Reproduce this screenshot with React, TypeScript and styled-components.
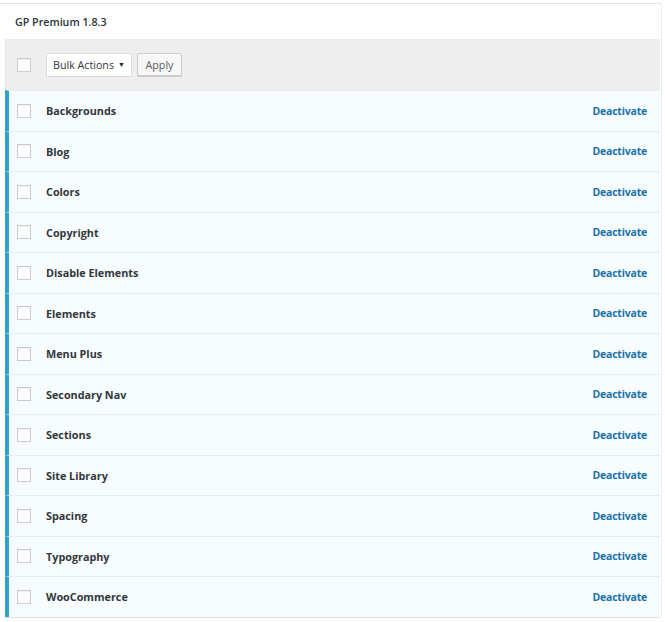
import React from "react";
import styled, { createGlobalStyle } from "styled-components";

const GlobalStyle = createGlobalStyle`
  html, body { margin: 0; padding: 0; background: #ffffff; }
  body { font-family: "Open Sans", "Noto Sans", sans-serif; color: #23282d; }
  * { box-sizing: border-box; }
`;

const Card = styled.div`
  margin-top: 3px;
  width: 662px;
  border-top: 1px solid #e6e6e6;
  border-right: 1px solid #ededed;
  background: #ffffff;
  display: flex;
  flex-direction: column;
`;

const Title = styled.div`
  height: 35px;
  display: flex;
  align-items: center;
  padding-left: 15px;
  font-size: 10.7px;
  font-weight: 600;
  color: #2c3338;
`;

const Table = styled.div`
  margin-left: 5px;
  width: 655px;
  display: flex;
  flex-direction: column;
  border-bottom: 1px solid #e3e3e3;
`;

const Header = styled.div`
  height: 51px;
  background: #eeeeee;
  border-left: 1px solid #e4e4e4;
  display: flex;
  align-items: center;
  padding-left: 11px;
`;

const Check = styled.span`
  width: 14px;
  height: 14px;
  flex: none;
  background: #ffffff;
  border: 1px solid #c9ccce;
  box-shadow: inset 0 1px 2px rgba(0, 0, 0, 0.07);
`;

const Select = styled.div`
  margin-left: 15px;
  height: 24px;
  width: 86px;
  background: #ffffff;
  border: 1px solid #dddddd;
  display: flex;
  align-items: center;
  justify-content: space-between;
  padding: 0 6px 0 6px;
  font-size: 10.7px;
  white-space: nowrap;
  color: #32373c;
`;

const Caret = styled.span`
  font-size: 7px;
  color: #222;
`;

const Button = styled.div`
  height: 23px;
  margin-left: 5px;
  width: 45px;
  display: flex;
  align-items: center;
  justify-content: center;
  background: #f7f7f7;
  border: 1px solid #cccccc;
  border-radius: 2px;
  box-shadow: 0 1px 0 #cccccc;
  font-size: 10.7px;
  color: #555d66;
`;

const Row = styled.div`
  height: 40.5px;
  background: #f7fcfe;
  border-left: 4px solid #2ea2cc;
  border-top: 1px solid #e7ecee;
  display: flex;
  align-items: center;
  padding-left: 8px;
  padding-right: 13px;
`;

const Name = styled.span`
  margin-left: 15px;
  flex: 1;
  font-size: 10.8px;
  font-weight: 700;
  color: #32373c;
`;

const Action = styled.a`
  font-size: 10.5px;
  font-weight: 700;
  letter-spacing: -0.2px;
  color: #1a72a8;
  text-decoration: none;
`;

const plugins = [
  "Backgrounds",
  "Blog",
  "Colors",
  "Copyright",
  "Disable Elements",
  "Elements",
  "Menu Plus",
  "Secondary Nav",
  "Sections",
  "Site Library",
  "Spacing",
  "Typography",
  "WooCommerce",
];

export default function App() {
  return (
    <>
      <GlobalStyle />
      <Card>
        <Title>GP Premium 1.8.3</Title>
        <Table>
          <Header>
            <Check />
            <Select>
              <span>Bulk Actions</span>
              <Caret>▼</Caret>
            </Select>
            <Button>Apply</Button>
          </Header>
          {plugins.map((p) => (
            <Row key={p}>
              <Check />
              <Name>{p}</Name>
              <Action href="#">Deactivate</Action>
            </Row>
          ))}
        </Table>
      </Card>
    </>
  );
}
